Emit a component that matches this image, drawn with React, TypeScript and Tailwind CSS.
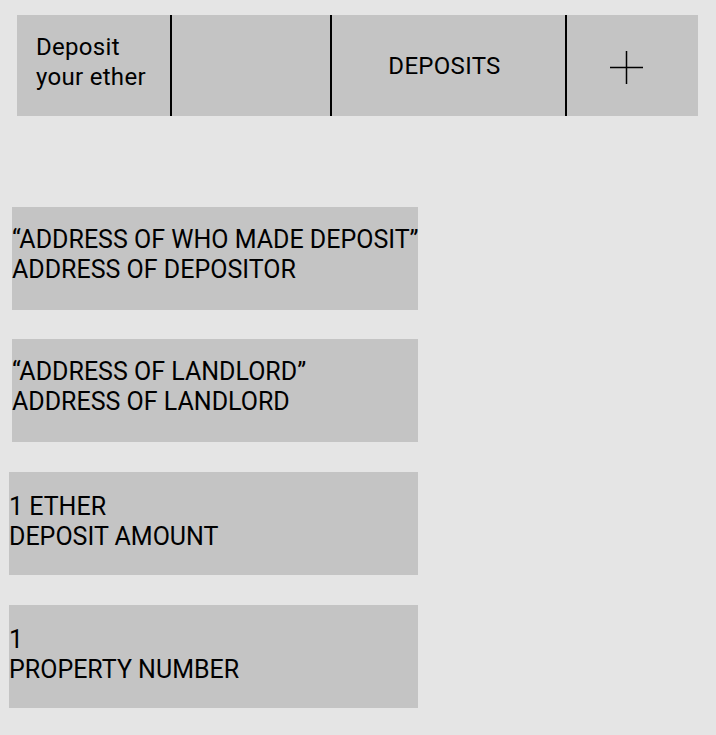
import React from "react";

function Card({ top, l1, l2, x, pt }: { top: string; l1: string; l2: string; x: string; pt: string }) {
  return (
    <div className={`${top} ${x} h-[103px] bg-[#c4c4c4] ${pt} text-[25px] leading-[30px] text-black whitespace-nowrap`}>
      <div>{l1}</div>
      <div>{l2}</div>
    </div>
  );
}

export default function App() {
  return (
    <div
      className="w-[716px] h-[735px] bg-[#e5e5e5] flex flex-col overflow-hidden"
      style={{ fontFamily: "Roboto, 'Liberation Sans', sans-serif" }}
    >
      <div className="mt-[15px] ml-[17px] w-[681px] h-[101px] bg-[#c4c4c4] flex text-black">
        <div className="w-[153px] pl-[19px] pt-[17px] text-[24px] leading-[30px] tracking-[0.3px]">
          <div>Deposit</div>
          <div>your ether</div>
        </div>
        <div className="w-[2px] bg-black" />
        <div className="w-[158px]" />
        <div className="w-[2px] bg-black" />
        <div className="w-[233px] flex items-center justify-center text-[24px] tracking-[0.3px] pr-[8px]">DEPOSITS</div>
        <div className="w-[2px] bg-black" />
        <div className="flex-1 flex items-center pl-[43px] pt-[4px]">
          <svg width="33" height="33" viewBox="0 0 33 33">
            <line x1="16.5" y1="0" x2="16.5" y2="33" stroke="#000" strokeWidth="1.5" />
            <line x1="0" y1="16.5" x2="33" y2="16.5" stroke="#000" strokeWidth="1.5" />
          </svg>
        </div>
      </div>
      <Card top="mt-[91px]" x="ml-[12px] w-[406px]" pt="pt-[18px]" l1="“ADDRESS OF WHO MADE DEPOSIT”" l2="ADDRESS OF DEPOSITOR" />
      <Card top="mt-[29px]" x="ml-[12px] w-[406px]" pt="pt-[18px]" l1="“ADDRESS OF LANDLORD”" l2="ADDRESS OF LANDLORD" />
      <Card top="mt-[30px]" x="ml-[9px] w-[409px]" pt="pt-[20px]" l1="1 ETHER" l2="DEPOSIT AMOUNT" />
      <Card top="mt-[30px]" x="ml-[9px] w-[409px]" pt="pt-[20px]" l1="1" l2="PROPERTY NUMBER" />
    </div>
  );
}
